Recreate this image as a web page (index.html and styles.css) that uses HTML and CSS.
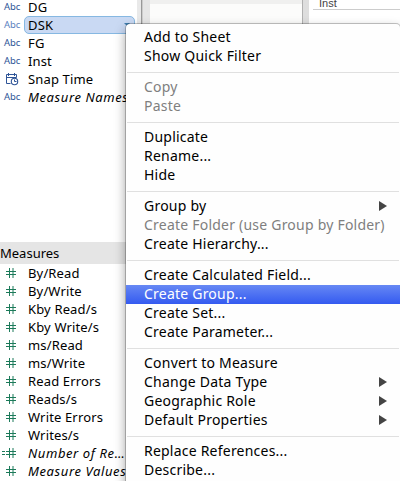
FILE: index.html
```html
<!DOCTYPE html>
<html lang="en">
<head>
<meta charset="utf-8">
<title>Data pane</title>
<link rel="stylesheet" href="styles.css">
</head>
<body>
<svg class="defs" width="0" height="0" aria-hidden="true">
  <symbol id="hash" viewBox="0 0 16 12"><path d="M6.5 1v10M10 1v10M3 4.5h10M3 7.5h10" fill="none" stroke="currentColor"/></symbol>
  <symbol id="calc-hash" viewBox="0 0 16 12"><path d="M6.5 1v10M10 1v10M3 4.5h10M3 7.5h10M-1 4.5h3M-1 7.5h3" fill="none" stroke="currentColor"/></symbol>
</svg>
<div class="app">
  <aside class="pane">
    <ul class="fields dimensions">
      <li><span class="abc">Abc</span><span class="name">DG</span></li>
      <li class="selected"><span class="abc">Abc</span><span class="name">DSK</span><i class="drop"></i></li>
      <li><span class="abc">Abc</span><span class="name">FG</span></li>
      <li><span class="abc">Abc</span><span class="name">Inst</span></li>
      <li><svg class="date" viewBox="0 0 14 14"><path d="M5.5 11.5h-4v-9h10v3M1.5 5.5h10M3.5 1v3M9.5 1v3" fill="none" stroke="currentColor"/><circle cx="9.5" cy="9.5" r="3.2" fill="#fff" stroke="currentColor" stroke-width="1.1"/><path d="M9.5 7.5v2h2" fill="none" stroke="currentColor"/></svg><span class="name">Snap Time</span></li>
      <li><span class="abc">Abc</span><span class="name italic">Measure Names</span></li>
    </ul>
    <h2>Measures</h2>
    <ul class="fields measures">
      <li><svg class="num"><use href="#hash"/></svg><span class="name">By/Read</span></li>
      <li><svg class="num"><use href="#hash"/></svg><span class="name">By/Write</span></li>
      <li><svg class="num"><use href="#hash"/></svg><span class="name">Kby Read/s</span></li>
      <li><svg class="num"><use href="#hash"/></svg><span class="name">Kby Write/s</span></li>
      <li><svg class="num"><use href="#hash"/></svg><span class="name">ms/Read</span></li>
      <li><svg class="num"><use href="#hash"/></svg><span class="name">ms/Write</span></li>
      <li><svg class="num"><use href="#hash"/></svg><span class="name">Read Errors</span></li>
      <li><svg class="num"><use href="#hash"/></svg><span class="name">Reads/s</span></li>
      <li><svg class="num"><use href="#hash"/></svg><span class="name">Write Errors</span></li>
      <li><svg class="num"><use href="#hash"/></svg><span class="name">Writes/s</span></li>
      <li><svg class="num"><use href="#calc-hash"/></svg><span class="name italic">Number of Re…</span></li>
      <li><svg class="num"><use href="#hash"/></svg><span class="name italic">Measure Values</span></li>
    </ul>
  </aside>
  <div class="splitter"></div>
  <section class="cards"></section>
  <div class="splitter right"></div>
  <section class="sheet"><div class="column">Inst</div></section>
</div>
<nav class="menu">
  <div class="item">Add to Sheet</div>
  <div class="item">Show Quick Filter</div>
  <hr>
  <div class="item off">Copy</div>
  <div class="item off">Paste</div>
  <hr>
  <div class="item">Duplicate</div>
  <div class="item">Rename...</div>
  <div class="item">Hide</div>
  <hr>
  <div class="item sub">Group by</div>
  <div class="item off">Create Folder (use Group by Folder)</div>
  <div class="item">Create Hierarchy...</div>
  <hr>
  <div class="item">Create Calculated Field...</div>
  <div class="item active">Create Group...</div>
  <div class="item">Create Set...</div>
  <div class="item">Create Parameter...</div>
  <hr>
  <div class="item">Convert to Measure</div>
  <div class="item sub">Change Data Type</div>
  <div class="item sub">Geographic Role</div>
  <div class="item sub">Default Properties</div>
  <hr>
  <div class="item">Replace References...</div>
  <div class="item">Describe...</div>
</nav>
</body>
</html>
```
FILE: styles.css
```css
* { box-sizing: border-box; }
body {
  margin: 0;
  width: 400px;
  height: 481px;
  overflow: hidden;
  position: relative;
  background: #fff;
  color: #000;
  font-family: "Lucida Grande", "Noto Sans", sans-serif;
}
.defs { position: absolute; }
.app { display: flex; height: 481px; }
.pane { width: 137px; flex: none; }
.fields { list-style: none; margin: 0; padding: 0; }
.dimensions { margin-top: -2px; height: 244px; }
.fields li {
  height: 18px;
  display: flex;
  align-items: center;
  font-size: 13px;
  line-height: 18px;
  letter-spacing: .15px;
  white-space: nowrap;
}
.abc { width: 24px; padding-left: 4px; font-size: 9.5px; letter-spacing: -.1px; color: #2f5597; flex: none; }
.name { padding-left: 4px; }
.italic { font-style: italic; letter-spacing: .6px; }
.selected .abc { color: #5b7fc0; }
.selected .name {
  width: 111px;
  height: 18px;
  line-height: 16px;
  padding-left: 3px;
  border: 1px solid #86b8e2;
  border-radius: 5px;
  background: #c9d9f3;
}
.drop {
  margin-left: -11px;
  margin-top: -1px;
  border: 3px solid transparent;
  border-top-color: #3f7fb0;
  border-bottom: 0;
}
.date { width: 14px; height: 14px; margin: 0 5px; color: #2f5597; flex: none; }
.num { width: 16px; height: 12px; margin: 0 5px 0 3px; color: #1c7a5a; overflow: visible; flex: none; }
symbol { overflow: visible; }
h2 {
  margin: 0;
  height: 22px;
  background: #e5e5e5;
  font-size: 13px;
  font-weight: 400;
  line-height: 22px;
}
.splitter {
  flex: none;
  width: 13px;
  background: linear-gradient(90deg, #e9e9e9 4px, #999 4px, #999 5px, #ccc 5px, #ccc 6px, #e6e6e6 6px);
}
.cards { width: 152px; flex: none; background: linear-gradient(#f0f0ef 4px, #fcfcfb 4px); }
.splitter.right { width: 7px; background: linear-gradient(90deg, #b0b0b0 1px, #dedede 1px); }
.sheet { flex: 1; padding-left: 4px; }
.column {
  height: 10px;
  padding-left: 6px;
  border-bottom: 1px solid #ccc;
  font: 11px/6px "Liberation Sans", sans-serif;
  color: #444;
}
.menu {
  position: absolute;
  left: 126px;
  top: 24px;
  width: 274px;
  height: 470px;
  padding-top: 4px;
  background: #fefefe;
  border-radius: 4px 4px 0 0;
  box-shadow: 0 0 0 1px rgba(0,0,0,.22), 0 5px 12px rgba(0,0,0,.4);
}
.item {
  height: 19px;
  padding: 0 13px 2px 18px;
  display: flex;
  align-items: center;
  justify-content: space-between;
  font-size: 14px;
  line-height: 17px;
  letter-spacing: .22px;
  white-space: nowrap;
}
.off { color: #7f7f7f; }
.active { color: #fff; background: linear-gradient(#6688f4, #345af0); }
.sub::after {
  content: "";
  border: 5px solid transparent;
  border-left: 8px solid #444;
  border-right: 0;
}
hr { margin: 6px 1px 5px; height: 1px; border: 0; background: #e0e0e0; }
```
